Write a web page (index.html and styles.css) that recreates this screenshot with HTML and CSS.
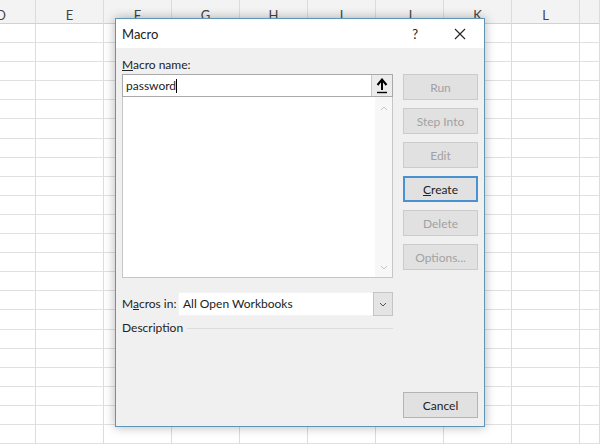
FILE: index.html
```html
<!DOCTYPE html>
<html lang="en">
<head>
    <meta charset="UTF-8">
    <title>Macro</title>
    <link rel="stylesheet" href="styles.css">
</head>
<body>

<!-- Spreadsheet behind the dialog -->
<div class="sheet" id="sheet">
    <div class="col-head col-d">D</div>
    <div class="col-head">E</div>
    <div class="col-head">F</div>
    <div class="col-head">G</div>
    <div class="col-head">H</div>
    <div class="col-head">I</div>
    <div class="col-head">J</div>
    <div class="col-head">K</div>
    <div class="col-head">L</div>
    <div class="col-head"></div>
</div>

<!-- Macro dialog -->
<div class="dialog">
    <div class="title-bar">
        <span class="title">Macro</span>
        <span class="help">?</span>
        <svg class="close" width="12" height="12" viewBox="0 0 12 12">
            <path d="M1 1 L11 11 M11 1 L1 11" stroke="#222" stroke-width="1.1" fill="none"/>
        </svg>
    </div>

    <div class="dialog-body">
        <div class="left-col">
            <div class="label"><u>M</u>acro name:</div>
            <div class="name-box">
                <div class="name-input">password<span class="caret"></span></div>
                <div class="up-btn">
                    <svg width="12" height="16" viewBox="0 0 12 16">
                        <path d="M6 2 L6 12" stroke="#000" stroke-width="2"/>
                        <path d="M1.5 7 L6 1.5 L10.5 7" stroke="#000" stroke-width="2" fill="none"/>
                        <path d="M1 14.5 L11 14.5" stroke="#000" stroke-width="1.4"/>
                    </svg>
                </div>
            </div>
            <div class="macro-list">
                <div class="list-area"></div>
                <div class="scroll">
                    <svg width="8" height="5" viewBox="0 0 8 5"><path d="M1 4 L4 1 L7 4" stroke="#c4c4c4" fill="none"/></svg>
                    <svg width="8" height="5" viewBox="0 0 8 5"><path d="M1 1 L4 4 L7 1" stroke="#c4c4c4" fill="none"/></svg>
                </div>
            </div>
            <div class="macros-in">
                <span class="label">M<u>a</u>cros in:</span>
                <div class="select">
                    <span class="select-text">All Open Workbooks</span>
                    <div class="select-btn">
                        <svg width="8" height="5" viewBox="0 0 8 5"><path d="M1 1 L4 4 L7 1" stroke="#555" fill="none"/></svg>
                    </div>
                </div>
            </div>
            <div class="description">
                <span class="label">Description</span>
                <span class="rule"></span>
            </div>
        </div>

        <div class="right-col">
            <button class="btn" disabled>Run</button>
            <button class="btn" disabled>Step Into</button>
            <button class="btn" disabled>Edit</button>
            <button class="btn btn-default"><u>C</u>reate</button>
            <button class="btn" disabled>Delete</button>
            <button class="btn" disabled>Options...</button>
            <button class="btn btn-cancel">Cancel</button>
        </div>
    </div>
</div>

<script>
    // Fill the sheet with empty cells
    const sheet = document.getElementById('sheet');
    for (let i = 0; i < 22 * 10; i++) {
        const cell = document.createElement('div');
        cell.classList.add('cell');
        sheet.appendChild(cell);
    }
</script>

</body>
</html>
```

FILE: styles.css
```css
body {
    margin: 0;
    width: 600px;
    height: 446px;
    overflow: hidden;
    position: relative;
    background-color: #fff;
    font-family: Lato, "Noto Sans", sans-serif;
}
.sheet {
    display: grid;
    grid-template-columns: 36px repeat(8, 68px) 20px;
    grid-template-rows: 24px;
    grid-auto-rows: 19.1px;
    height: 446px;
    overflow: hidden;
}
.col-head {
    background-color: #f3f3f3;
    border-right: 1px solid #dcdcdc;
    border-bottom: 1px solid #d2d2d2;
    box-sizing: border-box;
    display: flex;
    justify-content: center;
    align-items: flex-end;
    font-size: 13px;
    line-height: 16px;
    color: #444;
}
.col-d {
    justify-content: flex-start;
    text-indent: -4px;
}
.cell {
    border-right: 1px solid #dcdcdc;
    border-bottom: 1px solid #e0e0e0;
    box-sizing: border-box;
}

/* Dialog */
.dialog {
    position: absolute;
    left: 115px;
    top: 18px;
    width: 368px;
    height: 407px;
    border: 1px solid #5e96b8;
    background-color: #f0f0f0;
    box-shadow: 0 0 10px rgba(0, 0, 0, 0.3);
    display: flex;
    flex-direction: column;
    font-size: 12px;
    color: #222;
}
.title-bar {
    height: 29px;
    background-color: #fff;
    display: flex;
    align-items: center;
    padding-left: 6px;
}
.title {
    font-size: 13px;
    flex: 1;
}
.help {
    font-size: 13px;
    margin-right: 36px;
}
.close {
    margin-right: 18px;
}
.dialog-body {
    flex: 1;
    display: grid;
    grid-template-columns: 271px 75px;
    column-gap: 10px;
    padding: 8px 6px 8px 6px;
}
.left-col {
    display: flex;
    flex-direction: column;
}
.label {
    height: 18px;
    line-height: 18px;
}
.name-box {
    height: 23px;
    box-sizing: border-box;
    border: 1px solid #a9a9a9;
    background-color: #fff;
    display: flex;
}
.name-input {
    flex: 1;
    padding-left: 3px;
    line-height: 21px;
}
.caret {
    display: inline-block;
    width: 1px;
    height: 14px;
    background-color: #000;
    vertical-align: -3px;
}
.up-btn {
    width: 20px;
    border-left: 1px solid #c8c8c8;
    background-color: #ececec;
    display: flex;
    justify-content: center;
    align-items: center;
}
.macro-list {
    height: 181px;
    box-sizing: border-box;
    border: 1px solid #c6c6c6;
    border-top: none;
    background-color: #fff;
    display: flex;
}
.list-area {
    flex: 1;
}
.scroll {
    width: 17px;
    background-color: #f7f7f7;
    display: flex;
    flex-direction: column;
    justify-content: space-between;
    align-items: center;
    padding: 9px 0 7px;
}
.macros-in {
    display: flex;
    align-items: center;
    margin-top: 14px;
    height: 24px;
}
.macros-in .label {
    width: 56px;
}
.select {
    flex: 1;
    height: 24px;
    box-sizing: border-box;
    background-color: #fff;
    border: 1px solid #f3f3f3;
    border-right: none;
    display: flex;
}
.select-text {
    flex: 1;
    padding-left: 4px;
    line-height: 22px;
}
.select-btn {
    width: 18px;
    background-color: #e4e4e4;
    border: 1px solid #c4c4c4;
    margin: -1px 0;
    display: flex;
    justify-content: center;
    align-items: center;
}
.description {
    display: flex;
    align-items: center;
    margin-top: 3px;
}
.rule {
    flex: 1;
    height: 1px;
    background-color: #dcdcdc;
    margin-left: 4px;
}
.right-col {
    display: flex;
    flex-direction: column;
    gap: 8px;
    padding-top: 18px;
}
.btn {
    height: 26px;
    box-sizing: border-box;
    background-color: #e1e1e1;
    border: 1px solid #cbcbcb;
    font-family: Lato, "Noto Sans", sans-serif;
    font-size: 12px;
    color: #a2a2a2;
    padding: 0;
}
.btn-default {
    border: 2px solid #4a92cf;
    color: #222;
}
.btn-cancel {
    margin-top: auto;
    border-color: #b4b4b4;
    color: #222;
}
```
